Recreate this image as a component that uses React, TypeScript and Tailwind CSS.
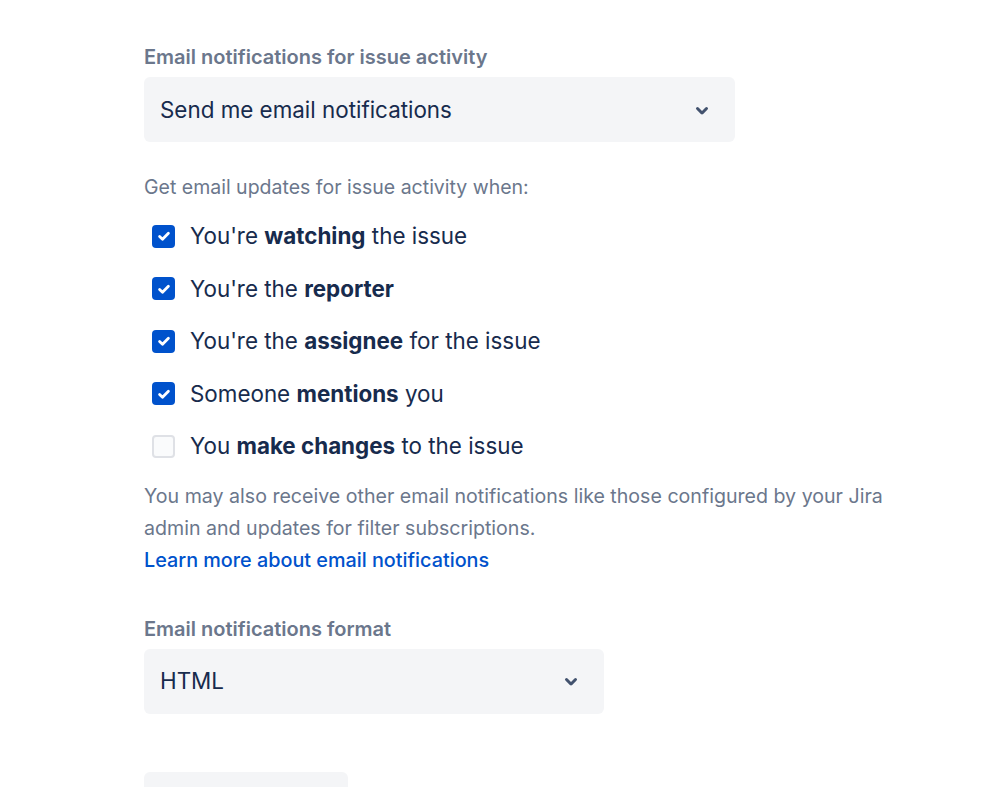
import React from "react"

const font = { fontFamily: "Inter, 'Noto Sans', sans-serif" }

const Chevron: React.FC = () => (
  <svg width="36" height="36" viewBox="0 0 24 24" className="shrink-0 text-[#42526e]">
    <path
      fill="currentColor"
      d="M8.292 10.293a1.009 1.009 0 000 1.419l2.939 2.965c.218.215.5.322.779.322s.556-.107.769-.322l2.93-2.955a1.01 1.01 0 000-1.419.987.987 0 00-1.406 0l-2.298 2.317-2.307-2.327a.99.99 0 00-1.406 0z"
    />
  </svg>
)

const Select: React.FC<{ value: string; width: string }> = ({ value, width }) => (
  <div
    className={`${width} h-[65px] mt-2 rounded-md bg-[#f4f5f7] flex items-center justify-between pl-4 pr-[15px]`}
  >
    <span className="text-[22.4px] text-[#172b4d]">{value}</span>
    <Chevron />
  </div>
)

const Check: React.FC<{ checked: boolean; children: React.ReactNode }> = ({ checked, children }) => (
  <li className="flex items-center h-[52.5px]">
    <span className="w-[38px] flex ml-[8px]">
      {checked ? (
        <span className="w-[23px] h-[23px] rounded-[4px] bg-[#0052cc] flex items-center justify-center">
          <svg width="16" height="16" viewBox="0 0 16 16">
            <path d="M3.6 8.4l2.9 2.8L12.4 5.2" stroke="white" strokeWidth="2.8" fill="none" strokeLinecap="round" strokeLinejoin="round" />
          </svg>
        </span>
      ) : (
        <span className="w-[23px] h-[23px] rounded-[4px] bg-[#fafbfc] border-2 border-[#dfe1e6]" />
      )}
    </span>
    <span className="text-[22.4px] text-[#172b4d]">{children}</span>
  </li>
)

export default function App() {
  return (
    <div className="min-h-screen bg-white pl-[144px] pt-[45px]" style={font}>
      <div className="text-[20px] leading-6 font-semibold text-[#6b778c]">
        Email notifications for issue activity
      </div>
      <Select value="Send me email notifications" width="w-[591px]" />

      <p className="mt-[33px] text-[19.5px] leading-6 text-[#6b778c]">
        Get email updates for issue activity when:
      </p>
      <ul className="mt-[11px]">
        <Check checked>
          You're <b className="font-bold">watching</b> the issue
        </Check>
        <Check checked>
          You're the <b className="font-bold">reporter</b>
        </Check>
        <Check checked>
          You're the <b className="font-bold">assignee</b> for the issue
        </Check>
        <Check checked>
          Someone <b className="font-bold">mentions</b> you
        </Check>
        <Check checked={false}>
          You <b className="font-bold">make changes</b> to the issue
        </Check>
      </ul>

      <p className="mt-[7px] w-[760px] text-[19.6px] leading-8 text-[#6b778c]">
        You may also receive other email notifications like those configured by your Jira admin and
        updates for filter subscriptions.
      </p>
      <a href="#" className="block text-[19.8px] leading-8 font-medium text-[#0052cc]">
        Learn more about email notifications
      </a>

      <div className="mt-[41px] text-[20px] leading-6 font-semibold text-[#6b778c]">
        Email notifications format
      </div>
      <Select value="HTML" width="w-[460px]" />

      <div className="mt-[58px] w-[204px] h-[44px] rounded-md bg-[#f4f5f7]" />
    </div>
  )
}
